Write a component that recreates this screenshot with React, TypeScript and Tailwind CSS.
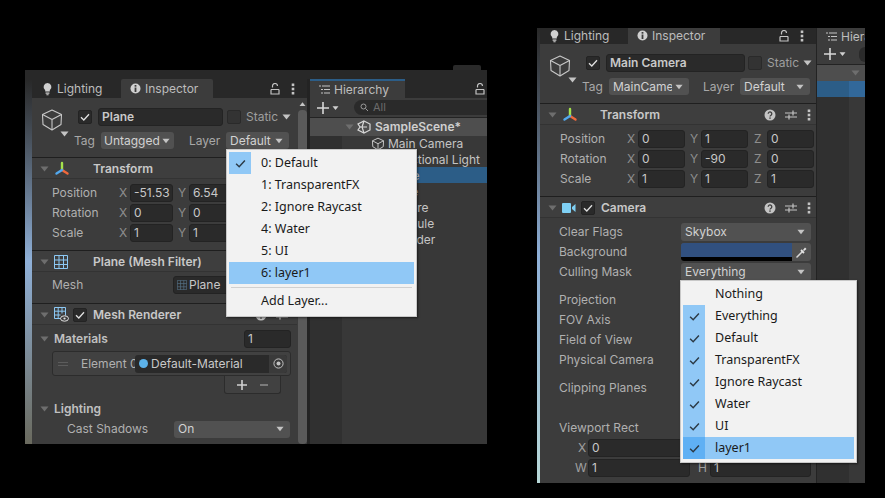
const ui = "font-['Inter','Liberation_Sans',sans-serif]"

function Caret({ className = "" }: { className?: string }) {
    return (
        <svg width="9" height="6" viewBox="0 0 9 6" className={`shrink-0 ${className}`}>
            <path d="M0.5 0.5h8L4.5 5.5z" fill="currentColor" />
        </svg>
    )
}

function Tick({ color = "#e0e0e0", size = 10 }: { color?: string; size?: number }) {
    return (
        <svg width={size} height={size} viewBox="0 0 10 10" className="shrink-0">
            <path d="M1 5.2l2.8 2.8L9 2.2" fill="none" stroke={color} strokeWidth="1.3" />
        </svg>
    )
}

function CheckBox({ on = true }: { on?: boolean }) {
    return (
        <div className="flex h-[14px] w-[14px] shrink-0 items-center justify-center rounded-[2px] border border-[#232323] bg-[#2a2a2a]">
            {on && <Tick />}
        </div>
    )
}

function Field({ w, children, className = "" }: { w: number | string; children?: React.ReactNode; className?: string }) {
    return (
        <div
            className={`flex h-[18px] shrink-0 items-center overflow-hidden whitespace-nowrap rounded-[3px] border border-[#232323] bg-[#2a2a2a] pl-[3px] text-[#c8c8c8] ${className}`}
            style={{ width: w }}
        >
            {children}
        </div>
    )
}

function Drop({ w, h = 17, children, tight }: { w: number; h?: number; children: React.ReactNode; tight?: boolean }) {
    return (
        <div
            className={`flex shrink-0 items-center justify-between rounded-[3px] bg-[#515151] text-[#d2d2d2] ${tight ? "gap-px pl-[3px] pr-[4px]" : "gap-[3px] pl-[4px] pr-[6px]"}`}
            style={{ width: w, height: h }}
        >
            <span className={`overflow-hidden whitespace-nowrap ${h > 17 ? "pb-[1px]" : ""}`}>{children}</span>
            <Caret className="w-[8px] text-[#c4c4c4]" />
        </div>
    )
}

function Lock() {
    return (
        <svg width="10" height="12" viewBox="0 0 10 12" fill="none" stroke="#c4c4c4" strokeWidth="1.2">
            <path d="M2.5 4.5V3a2.5 2.5 0 015 0" />
            <path d="M1 6.5h8M1 6.5v4.5h8V6.5" />
        </svg>
    )
}

function Kebab() {
    return (
        <svg width="4" height="12" viewBox="0 0 4 12" fill="#c4c4c4">
            <rect x="0.7" y="0.5" width="2.6" height="2.6" />
            <rect x="0.7" y="4.7" width="2.6" height="2.6" />
            <rect x="0.7" y="8.9" width="2.6" height="2.6" />
        </svg>
    )
}

function HeaderTools() {
    return (
        <div className="ml-auto flex items-center">
            <svg width="12" height="12" viewBox="0 0 12 12">
                <circle cx="6" cy="6" r="5.5" fill="#c4c4c4" />
                <path d="M4.2 4.8a1.8 1.8 0 113 1.3c-.7.5-1.2.8-1.2 1.5" fill="none" stroke="#3e3e3e" strokeWidth="1.3" />
                <rect x="5.3" y="8.4" width="1.4" height="1.4" fill="#3e3e3e" />
            </svg>
            <svg width="12" height="12" viewBox="0 0 12 12" className="ml-[9px]" stroke="#c4c4c4" strokeWidth="1.2">
                <path d="M0 4h12M0 8h12M8 1.5v5M4 5.5v5" />
            </svg>
            <div className="ml-[10px] mr-[5px]">
                <Kebab />
            </div>
        </div>
    )
}

function AxesIcon() {
    return (
        <svg width="16" height="16" viewBox="0 0 16 16" className="shrink-0" fill="none" strokeWidth="2.4" strokeLinecap="round">
            <path d="M8 8.5V2" stroke="#a4e24c" />
            <path d="M8 9l5.5 3.5" stroke="#f0683c" />
            <path d="M8 9l-5.5 3.5" stroke="#52a8ee" />
        </svg>
    )
}

function CubeIcon() {
    return (
        <svg width="24" height="24" viewBox="0 0 24 24" fill="none" stroke="#c8c8c8" strokeWidth="1.1" strokeLinejoin="round">
            <path d="M12 2L21.5 6.5 21 16.5 12 22 3 16.5 2.5 6.5z" />
            <path d="M2.5 6.5L12 11.5 21.5 6.5M12 11.5V22" />
        </svg>
    )
}

function SmallCube() {
    return (
        <svg width="14" height="14" viewBox="0 0 24 24" fill="none" stroke="#c4c4c4" strokeWidth="1.7" strokeLinejoin="round" className="shrink-0">
            <path d="M12 2L21.5 6.5 21 16.5 12 22 3 16.5 2.5 6.5z" />
            <path d="M2.5 6.5L12 11.5 21.5 6.5M12 11.5V22" />
        </svg>
    )
}

function GridIcon({ size = 14, color = "#8cc8f4" }: { size?: number; color?: string }) {
    return (
        <svg width={size} height={size} viewBox="0 0 14 14" fill="none" stroke={color} strokeWidth="1" className="shrink-0">
            <path d="M.5.5h13v13H.5zM.5 5h13M.5 9.5h13M5 .5v13M9.5 .5v13" />
        </svg>
    )
}

function RendererIcon() {
    return (
        <svg width="15" height="15" viewBox="0 0 15 15" fill="none" className="shrink-0">
            <path d="M.5.5h11v8M.5.5v11h7M.5 4.2h11M.5 8h6M4.2.5v11M8 .5v6" stroke="#8cc8f4" />
            <ellipse cx="10.5" cy="11.5" rx="4" ry="2.7" fill="#3e3e3e" stroke="#e0e0e0" />
            <circle cx="10.5" cy="11.5" r="1.1" fill="#e0e0e0" />
        </svg>
    )
}

function SectionHead({ children }: { children: React.ReactNode }) {
    return (
        <div className="flex h-[21px] shrink-0 items-center border-b border-[#333] bg-[#3e3e3e] pl-[8px] pt-[1px] font-semibold text-[#c8c8c8]">
            {children}
        </div>
    )
}

function Fold({ className = "mr-[5px]" }: { className?: string }) {
    return <Caret className={`text-[#6e6e6e] ${className}`} />
}

function Tabs({ lockGap, lead = 0 }: { lockGap: number; lead?: number }) {
    return (
        <div className="flex h-[19px] shrink-0 items-end bg-[#282828] text-[#bdbdbd]" style={{ paddingLeft: lead }}>
            <div className="flex h-[19px] w-[88px] shrink-0 items-center pl-[9px]">
                <svg width="11" height="14" viewBox="0 0 11 14" fill="#d0d0d0" className="mr-[4px]">
                    <path d="M5.5 1a4 4 0 00-2.3 7.2V9.5h4.6V8.2A4 4 0 005.5 1zM3.6 10.5h3.8v1.2H3.6zM4.4 12.3h2.2v1H4.4z" />
                </svg>
                Lighting
            </div>
            <div className="flex h-[19px] w-[92px] shrink-0 items-center rounded-t-[2px] bg-[#3c3c3c] pl-[9px]">
                <svg width="11" height="11" viewBox="0 0 11 11" className="mr-[4px]">
                    <circle cx="5.5" cy="5.5" r="5" fill="#d0d0d0" />
                    <rect x="4.6" y="2" width="1.8" height="1.7" fill="#3c3c3c" />
                    <rect x="4.6" y="4.5" width="1.8" height="4.5" fill="#3c3c3c" />
                </svg>
                Inspector
            </div>
            <div className="flex h-[19px] items-center" style={{ marginLeft: lockGap }}>
                <Lock />
                <div className="ml-[11px]">
                    <Kebab />
                </div>
            </div>
        </div>
    )
}

function ObjectHeader({ name, tag, nameW, tagW, layerGap, layerW, staticGap, tight }: { name: string; tag: string; nameW: number; tagW: number; layerGap: number; layerW: number; staticGap: number; tight?: boolean }) {
    return (
        <div className="flex h-[60px] shrink-0 border-b border-[#1f1f1f] bg-[#3c3c3c] pl-[8px] pt-[10px]">
            <div className="w-[38px] shrink-0">
                <CubeIcon />
                <Caret className="ml-[20px] mt-[-1px] text-[#c4c4c4]" />
            </div>
            <div className="flex flex-col gap-[6px]">
                <div className="flex h-[18px] items-center">
                    <CheckBox />
                    <Field w={nameW} className="ml-[6px] font-semibold">{name}</Field>
                    <div className="h-[14px] w-[14px] shrink-0 rounded-[2px] border border-[#2a2a2a] bg-[#333]" style={{ marginLeft: staticGap }} />
                    <span className="ml-[5px] text-[#9e9e9e]">Static</span>
                    <Caret className="ml-[4px] text-[#c4c4c4]" />
                </div>
                <div className="ml-[-4px] flex h-[17px] items-center">
                    <span className="w-[27px] text-[#a8a8a8]">Tag</span>
                    <Drop w={tagW} tight={tight}>{tag}</Drop>
                    <span className="w-[37px] text-[#a8a8a8]" style={{ marginLeft: layerGap }}>Layer</span>
                    <Drop w={layerW}>Default</Drop>
                </div>
            </div>
        </div>
    )
}

function VecRow({ label, x, y, z, fw, gap }: { label: string; x: string; y: string; z: string; fw: number; gap: number }) {
    return (
        <div className="flex h-[20px] items-center pl-[20px]">
            <span className="w-[67px] shrink-0 text-[#b0b0b0]">{label}</span>
            <span className="w-[11px] shrink-0 text-[#8e8e8e]">X</span>
            <Field w={fw}>{x}</Field>
            <span className="shrink-0 text-[#8e8e8e]" style={{ width: gap }}>
                <span className="ml-[5px]">Y</span>
            </span>
            <Field w={fw}>{y}</Field>
            <span className="shrink-0 text-[#8e8e8e]" style={{ width: gap + 3 }}>
                <span className="ml-[6px]">Z</span>
            </span>
            <Field w={fw}>{z}</Field>
        </div>
    )
}

function MenuItem({ text, on, hot, dark }: { text: string; on?: boolean; hot?: boolean; dark?: boolean }) {
    return (
        <div className={`flex h-[22px] items-center ${hot ? "bg-[#90c8f6]" : ""}`}>
            <div className={`flex h-[22px] w-[22px] shrink-0 items-center justify-center ${dark ? "bg-[#5fb0f4]" : on ? "bg-[#90c8f6]" : ""}`}>
                {on && <Tick color="#2c3a46" size={11} />}
            </div>
            <span className="ml-[10px] whitespace-nowrap">{text}</span>
        </div>
    )
}

function Menu({ className = "", children }: { className?: string; children: React.ReactNode }) {
    return (
        <div className={`absolute z-10 border border-[#c8c8c8] bg-[#f2f2f2] p-[2px] font-['Noto_Sans',sans-serif] text-[12.5px] text-[#1a1a1a] shadow-[1px_1px_2px_rgba(0,0,0,0.5)] ${className}`}>
            {children}
        </div>
    )
}

function HierarchyTab({ children }: { children: React.ReactNode }) {
    return (
        <div className="flex h-[19px] shrink-0 items-center bg-[#282828] text-[#bdbdbd]">
            <div className="flex h-[19px] w-[95px] shrink-0 items-center border-t-2 border-[#2c5d87] bg-[#3c3c3c] pl-[9px]">
                <svg width="11" height="9" viewBox="0 0 11 9" stroke="#c4c4c4" strokeWidth="1" className="mr-[4px] shrink-0">
                    <path d="M0 1h2M3 1h8M2 4.5h2M5 4.5h6M2 8h2M5 8h6" />
                </svg>
                Hierarchy
            </div>
            {children}
        </div>
    )
}

function PlusTool() {
    return (
        <div className="flex shrink-0 items-center pl-[7px] text-[#d0d0d0]">
            <svg width="12" height="12" viewBox="0 0 12 12" stroke="#d8d8d8" strokeWidth="1.6">
                <path d="M6 0v12M0 6h12" />
            </svg>
            <Caret className="ml-[2px] scale-75" />
        </div>
    )
}

function LeftWindow() {
    return (
        <div className={`absolute left-[25px] top-[70px] flex h-[374px] w-[462px] flex-col overflow-hidden bg-[#282828] text-[12px] ${ui}`}>
            <div className="h-[9px] shrink-0" />
            <div className="flex min-h-0 flex-1">
                <div className="w-[7px] shrink-0 bg-gradient-to-b from-[#282828] via-[#8fb0d8] to-[#6a6a5e]" />
                <div className="flex w-[275px] shrink-0 flex-col overflow-hidden bg-[#3c3c3c]">
                    <Tabs lockGap={57} lead={1} />
                    <div className="relative flex min-h-0 flex-1 flex-col">
                        <ObjectHeader name="Plane" tag="Untagged" nameW={125} tagW={73} layerGap={15} layerW={63} staticGap={4} tight />
                        <SectionHead>
                            <Fold />
                            <AxesIcon />
                            <span className="ml-[23px]">Transform</span>
                        </SectionHead>
                        <div className="flex h-[72px] shrink-0 flex-col border-b border-[#1f1f1f] pt-[4px]">
                            <VecRow label="Position" x="-51.53" y="6.54" z="0" fw={43} gap={16} />
                            <VecRow label="Rotation" x="0" y="0" z="0" fw={43} gap={16} />
                            <VecRow label="Scale" x="1" y="1" z="1" fw={43} gap={16} />
                        </div>
                        <SectionHead>
                            <Fold />
                            <GridIcon />
                            <span className="ml-[25px]">Plane (Mesh Filter)</span>
                        </SectionHead>
                        <div className="flex h-[32px] shrink-0 items-start border-b border-[#1f1f1f] pl-[20px] pt-[4px]">
                            <span className="w-[121px] text-[#b0b0b0]">Mesh</span>
                            <Field w={100} className="text-[#c8c8c8]">
                                <GridIcon size={10} color="#557186" />
                                <span className="ml-[2px]">Plane</span>
                            </Field>
                        </div>
                        <SectionHead>
                            <Fold />
                            <RendererIcon />
                            <div className="ml-[4px]">
                                <CheckBox />
                            </div>
                            <span className="ml-[6px]">Mesh Renderer</span>
                            <HeaderTools />
                        </SectionHead>
                        <div className="flex h-[23px] shrink-0 items-center pl-[8px] pr-[16px] pt-[4px] font-semibold text-[#c0c0c0]">
                            <Fold />
                            Materials
                            <Field w={47} className="ml-auto font-normal">1</Field>
                        </div>
                        <div className="ml-[20px] mr-[16px] mt-[3px] flex h-[25px] shrink-0 items-center rounded-[3px] border border-[#2c2c2c] bg-[#414141] pl-[5px] pr-[3px] text-[#b0b0b0]">
                            <span className="w-[10px] border-y border-[#5c5c5c] py-[1px]" />
                            <span className="ml-[13px] w-[54px] overflow-hidden whitespace-nowrap">Element 0</span>
                            <div className="flex h-[18px] flex-1 items-center rounded-[3px] bg-[#2a2a2a] pl-[4px] text-[#c8c8c8]">
                                <span className="h-[9px] w-[9px] rounded-full bg-[#5cb2ea]" />
                                <span className="ml-[3px]">Default-Material</span>
                                <span className="ml-auto flex h-[18px] w-[18px] items-center justify-center rounded-r-[3px] bg-[#3a3a3a]">
                                    <svg width="11" height="11" viewBox="0 0 11 11">
                                        <circle cx="5.5" cy="5.5" r="4.6" fill="none" stroke="#c4c4c4" />
                                        <circle cx="5.5" cy="5.5" r="2" fill="#c4c4c4" />
                                    </svg>
                                </span>
                            </div>
                        </div>
                        <div className="ml-[192px] flex h-[18px] w-[57px] shrink-0 items-center justify-center gap-[13px] rounded-b-[3px] border border-t-0 border-[#2c2c2c] bg-[#414141]">
                            <svg width="10" height="10" viewBox="0 0 10 10" stroke="#d0d0d0" strokeWidth="1.6"><path d="M5 0v10M0 5h10" /></svg>
                            <svg width="8" height="10" viewBox="0 0 8 10" stroke="#8a8a8a" strokeWidth="1.6"><path d="M0 5h8" /></svg>
                        </div>
                        <div className="mt-[5px] flex h-[20px] shrink-0 items-center pl-[8px] font-semibold text-[#c0c0c0]">
                            <Fold />
                            Lighting
                        </div>
                        <div className="flex h-[20px] shrink-0 items-center pl-[35px] text-[#b0b0b0]">
                            <span className="w-[107px]">Cast Shadows</span>
                            <Drop w={116}>On</Drop>
                        </div>
                        <div className="absolute right-0 top-0 flex h-full w-[10px] flex-col items-center bg-[#3c3c3c] pt-[3px]">
                            <Caret className="rotate-180 scale-75 text-[#c4c4c4]" />
                            <div className="mt-[3px] h-full w-[9px] rounded-[4px] bg-[#5a5a5a]" />
                        </div>
                    </div>
                </div>
                <div className="w-[3px] shrink-0 bg-[#232323]" />
                <div className="flex min-w-0 flex-1 flex-col">
                    <HierarchyTab>
                        <div className="ml-auto mr-[2px]">
                            <Lock />
                        </div>
                    </HierarchyTab>
                    <div className="flex h-[20px] shrink-0 items-center border-b border-[#232323] bg-[#3c3c3c]">
                        <PlusTool />
                        <div className="ml-[14px] flex h-[15px] flex-1 items-center rounded-l-[8px] bg-[#2a2a2a] pl-[6px] text-[11px] text-[#6c6c6c]">
                            <svg width="9" height="9" viewBox="0 0 9 9" fill="none" stroke="#9a9a9a" className="mr-[4px]">
                                <circle cx="3.5" cy="3.5" r="2.5" />
                                <path d="M5.5 5.5L8 8" />
                            </svg>
                            All
                        </div>
                    </div>
                    <div className="flex h-[18px] shrink-0 items-center bg-[#4e4e4e] pl-[35px] font-semibold text-[#d0d0d0]">
                        <Caret className="mr-[3px] text-[#6e6e6e]" />
                        <svg width="14" height="14" viewBox="0 0 14 14" fill="none" stroke="#d8d8d8" strokeWidth="1.2" className="mr-[4px] shrink-0">
                            <path d="M7 1l6 3v6l-6 3-6-3 2-3-2-3z" />
                            <path d="M3 7h7M7 1L5 7l2 6" />
                        </svg>
                        SampleScene*
                    </div>
                    <div className="flex min-h-0 flex-1">
                        <div className="w-[32px] shrink-0 bg-[#303030]" />
                        <div className="relative flex-1 bg-[#383838] text-[#c4c4c4]">
                            <div className="absolute -left-[32px] right-0 top-[31px] h-[16px] bg-[#2c5d87]" />
                            <div className="relative">
                                {["Main Camera", "Directional Light", "Plane", "Cube", "Sphere", "Capsule", "Cylinder"].map((n) => (
                                    <div key={n} className="flex h-[16px] items-center pl-[29px]">
                                        <div className="mr-[3px]">
                                            <SmallCube />
                                        </div>
                                        {n}
                                    </div>
                                ))}
                            </div>
                        </div>
                    </div>
                </div>
            </div>
            <Menu className="left-[201px] top-[79px] w-[191px]">
                <MenuItem text="0: Default" on />
                <MenuItem text="1: TransparentFX" />
                <MenuItem text="2: Ignore Raycast" />
                <MenuItem text="4: Water" />
                <MenuItem text="5: UI" />
                <MenuItem text="6: layer1" hot />
                <div className="mx-[2px] mt-[3px] h-px bg-[#d0d0d0]" />
                <div className="flex h-[26px] items-center pl-[32px]">Add Layer...</div>
            </Menu>
        </div>
    )
}

function PropRow({ label, mt = 0, children }: { label: string; mt?: number; children?: React.ReactNode }) {
    return (
        <div className="flex h-[20px] shrink-0 items-center pl-[19px]" style={{ marginTop: mt }}>
            <span className="w-[122px] shrink-0 text-[#b0b0b0]">{label}</span>
            {children}
        </div>
    )
}

function RightWindow() {
    return (
        <div className={`absolute left-[537px] top-[28px] flex h-[455px] w-[328px] overflow-hidden bg-[#282828] text-[12px] ${ui}`}>
            <div className="w-[3px] shrink-0 bg-gradient-to-b from-[#282828] via-[#8fb0d8] to-[#b8d8d8]" />
            <div className="flex w-[276px] shrink-0 flex-col overflow-hidden bg-[#3c3c3c]">
                <div className="h-[16px] overflow-hidden">
                    <div className="mt-[-2px]">
                        <Tabs lockGap={59} />
                    </div>
                </div>
                <ObjectHeader name="Main Camera" tag="MainCamera" nameW={139} tagW={80} layerGap={14} layerW={70} staticGap={3} />
                <SectionHead>
                    <Fold />
                    <AxesIcon />
                    <span className="ml-[22px]">Transform</span>
                    <HeaderTools />
                </SectionHead>
                <div className="flex h-[72px] shrink-0 flex-col border-b border-[#1f1f1f] pt-[4px]">
                    <VecRow label="Position" x="0" y="1" z="0" fw={47} gap={16} />
                    <VecRow label="Rotation" x="0" y="-90" z="0" fw={47} gap={16} />
                    <VecRow label="Scale" x="1" y="1" z="1" fw={47} gap={16} />
                </div>
                <SectionHead>
                    <Fold />
                    <svg width="14" height="12" viewBox="0 0 14 12" fill="#7fd0f4" className="shrink-0">
                        <rect x="0" y="1" width="9" height="10" rx="1" />
                        <path d="M10 5l3.5-3v8L10 7z" />
                    </svg>
                    <div className="ml-[5px]">
                        <CheckBox />
                    </div>
                    <span className="ml-[6px]">Camera</span>
                    <HeaderTools />
                </SectionHead>
                <div className="flex flex-col pt-[4px]">
                    <PropRow label="Clear Flags"><Drop w={130} h={18}>Skybox</Drop></PropRow>
                    <PropRow label="Background">
                        <div className="flex h-[18px] w-[130px] shrink-0 overflow-hidden rounded-[3px] bg-[#515151]">
                            <div className="flex w-[111px] flex-col">
                                <div className="h-[14px] bg-[#31507f]" />
                                <div className="h-[4px] bg-black" />
                            </div>
                            <div className="flex flex-1 items-center justify-center">
                                <svg width="13" height="13" viewBox="0 0 13 13" fill="none">
                                    <path d="M1.5 11.5L7.5 5.5" stroke="#d8d8d8" strokeWidth="1.5" />
                                    <path d="M6 4l3 3" stroke="#e4e4e4" strokeWidth="1.8" />
                                    <path d="M8 4l2-2.5 1.5 1.5L9 5z" fill="#e4e4e4" />
                                </svg>
                            </div>
                        </div>
                    </PropRow>
                    <PropRow label="Culling Mask"><Drop w={130} h={18}>Everything</Drop></PropRow>
                    <PropRow label="Projection" mt={8} />
                    <PropRow label="FOV Axis" />
                    <PropRow label="Field of View" />
                    <PropRow label="Physical Camera" />
                    <PropRow label="Clipping Planes" mt={8} />
                    <PropRow label="Viewport Rect" mt={20} />
                    <div className="flex h-[20px] shrink-0 items-center pl-[38px] text-[#a0a0a0]">
                        <span className="w-[10px]">X</span>
                        <Field w={102}>0</Field>
                    </div>
                    <div className="flex h-[20px] shrink-0 items-center pl-[35px] text-[#a0a0a0]">
                        <span className="w-[13px]">W</span>
                        <Field w={102}>1</Field>
                        <span className="ml-[8px] w-[12px]">H</span>
                        <Field w={101}>1</Field>
                    </div>
                </div>
            </div>
            <div className="w-px shrink-0 bg-[#232323]" />
            <div className="flex min-w-0 flex-1 flex-col overflow-hidden">
                <div className="h-[16px] overflow-hidden">
                    <div className="mt-[-2px] w-[48px] overflow-hidden">
                        <HierarchyTab>{null}</HierarchyTab>
                    </div>
                </div>
                <div className="flex h-[21px] shrink-0 items-center border-b border-[#232323] bg-[#3c3c3c]">
                    <PlusTool />
                    <div className="ml-[12px] h-[15px] flex-1 rounded-l-[8px] bg-[#2a2a2a]" />
                </div>
                <div className="flex h-[16px] shrink-0 items-center bg-[#4e4e4e] pl-[34px]">
                    <Caret className="text-[#6e6e6e]" />
                </div>
                <div className="flex h-[16px] shrink-0">
                    <div className="w-[32px] bg-[#2c5d87]" />
                    <div className="flex-1 bg-[#32689a]" />
                </div>
                <div className="flex min-h-0 flex-1">
                    <div className="w-[32px] bg-[#303030]" />
                    <div className="flex-1 bg-[#383838]" />
                </div>
            </div>
            <Menu className="left-[143px] top-[252px] w-[177px]">
                <MenuItem text="Nothing" />
                <MenuItem text="Everything" on />
                <MenuItem text="Default" on />
                <MenuItem text="TransparentFX" on />
                <MenuItem text="Ignore Raycast" on />
                <MenuItem text="Water" on />
                <MenuItem text="UI" on />
                <MenuItem text="layer1" on hot dark />
                <div className="h-[1px]" />
            </Menu>
        </div>
    )
}

export default function App() {
    return (
        <div className="relative h-[498px] w-[885px] overflow-hidden bg-black">
            <div className="absolute left-[453px] top-[65px] h-[5px] w-[28px] rounded-t-[2px] bg-[#2a2a2a]" />
            <LeftWindow />
            <RightWindow />
        </div>
    )
}
